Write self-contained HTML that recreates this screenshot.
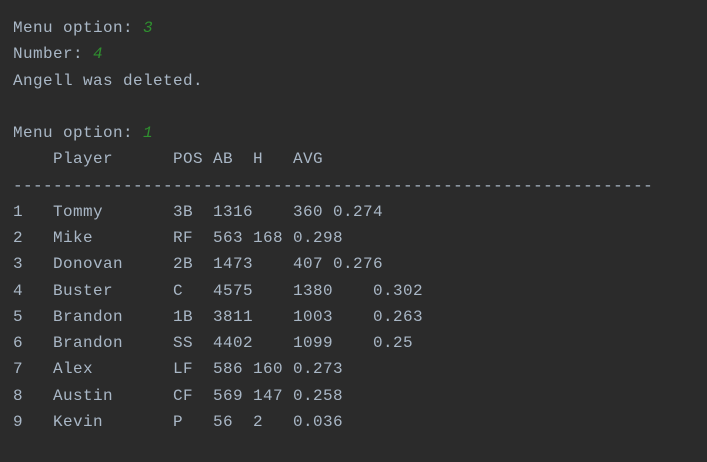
<!DOCTYPE html>
<html><head><meta charset="utf-8"><style>
html,body{margin:0;padding:0;background:#2b2b2b;width:707px;height:462px;overflow:hidden}
pre{margin:0;position:absolute;left:13px;top:15px;font-family:"Liberation Mono","DejaVu Sans Mono",monospace;font-size:16px;letter-spacing:0.4px;line-height:26.27px;color:#a9b7c6}
i{color:#2f8f2f}
</style></head><body><pre>Menu option: <i>3</i>
Number: <i>4</i>
Angell was deleted.

Menu option: <i>1</i>
    Player      POS AB  H   AVG
----------------------------------------------------------------
1   Tommy       3B  1316    360 0.274
2   Mike        RF  563 168 0.298
3   Donovan     2B  1473    407 0.276
4   Buster      C   4575    1380    0.302
5   Brandon     1B  3811    1003    0.263
6   Brandon     SS  4402    1099    0.25
7   Alex        LF  586 160 0.273
8   Austin      CF  569 147 0.258
9   Kevin       P   56  2   0.036</pre></body></html>
